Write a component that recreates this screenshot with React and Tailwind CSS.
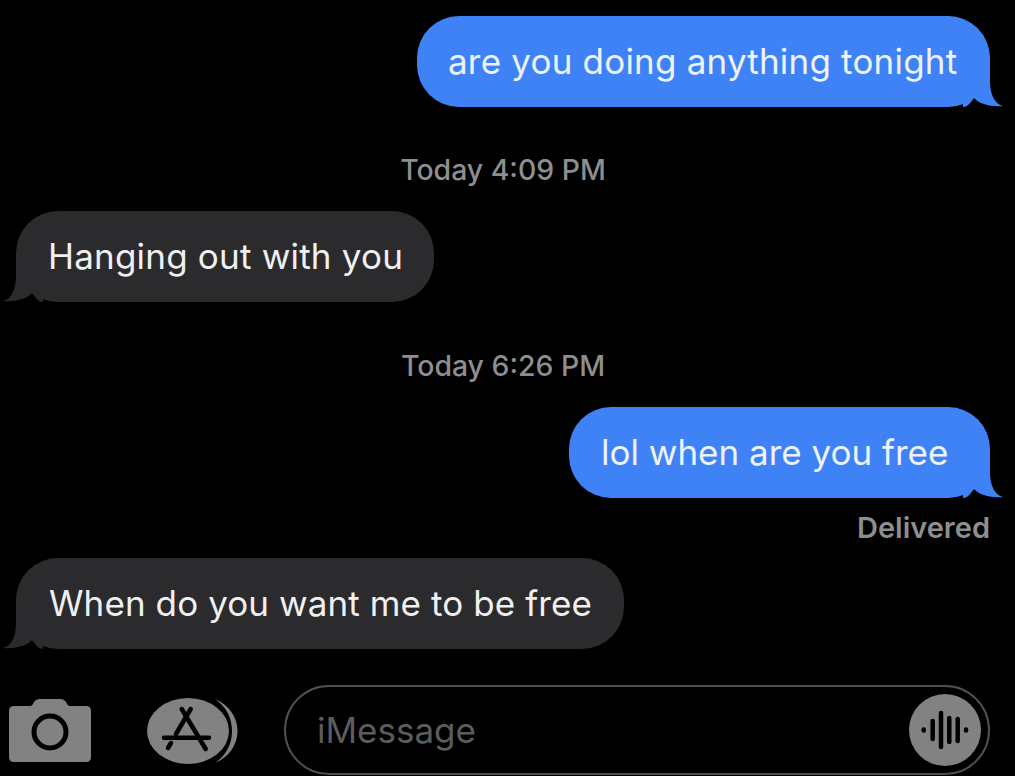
const font = { fontFamily: '"Inter", "Liberation Sans", sans-serif' };

function TailRight() {
  return (
    <svg className="absolute right-[-13px] bottom-0 w-[40px] h-[40px]" viewBox="0 0 40 40">
      <path d="M0 40 C5 40 8 35 11 31 C16 37 28 40 40 39 C32 37 27 28 27 14 L27 0 L0 0 Z" fill="#3f82f6" />
    </svg>
  );
}

function TailLeft() {
  return (
    <svg className="absolute left-[-13px] bottom-0 w-[40px] h-[40px]" viewBox="0 0 40 40">
      <path d="M40 40 C35 40 32 35 29 31 C24 37 12 40 0 39 C8 37 13 28 13 14 L13 0 L40 0 Z" fill="#2b2b2e" />
    </svg>
  );
}

function Sent({ children, className = "" }) {
  return (
    <div className={"relative self-end h-[91px] flex items-center rounded-[42px] bg-[#3f82f6] text-[#eef3fb] text-[35px] " + className}>
      <TailRight />
      <span className="relative">{children}</span>
    </div>
  );
}

function Received({ children, className = "" }) {
  return (
    <div className={"relative self-start h-[91px] flex items-center rounded-[42px] bg-[#2b2b2e] text-[#f0f0f0] text-[35px] " + className}>
      <TailLeft />
      <span className="relative">{children}</span>
    </div>
  );
}

function Stamp({ children, className = "" }) {
  return (
    <div className={"self-center text-[#8e8e90] text-[28.4px] leading-[34px] font-medium text-center " + className}>{children}</div>
  );
}

export default function App() {
  return (
    <div style={font} className="w-[1015px] h-[776px] bg-black overflow-hidden flex flex-col">
      <div className="flex flex-col pt-[16px] pl-[16px] pr-[25px]">
        <Sent className="w-[573px] pl-[31px] tracking-[0.2px]">are you doing anything tonight</Sent>
        <Stamp className="mt-[46px]">Today 4:09 PM</Stamp>
        <Received className="mt-[24px] w-[418px] pl-[32px] tracking-[0.2px]">Hanging out with you</Received>
        <Stamp className="mt-[47px]">Today 6:26 PM</Stamp>
        <Sent className="mt-[24px] w-[421px] pl-[32px]">lol when are you free</Sent>
        <div className="self-end mt-[13px] text-[#8e8e90] text-[29px] leading-[34px] font-semibold">Delivered</div>
        <Received className="mt-[13px] w-[608px] pl-[33px] tracking-[0.1px]">When do you want me to be free</Received>
      </div>
      <div className="flex items-start mt-[36px] pl-[9px] pr-[25px]">
        <svg className="w-[82px] h-[64px] mt-[14px] shrink-0" viewBox="0 0 82 64">
          <path d="M5 7 H21 Q23 7 24 5 L25 3 Q27 0 31 0 H51 Q55 0 57 3 L58 5 Q59 7 61 7 H77 Q82 7 82 12 V58 Q82 63 77 63 H5 Q0 63 0 58 V12 Q0 7 5 7 Z" fill="#828282" />
          <circle cx="41" cy="33" r="16" fill="none" stroke="#000" strokeWidth="5" />
        </svg>
        <svg className="w-[92px] h-[68px] mt-[12px] ml-[56px] shrink-0" viewBox="0 0 92 68">
          <path d="M68 2 C82 8 90.5 20 90.5 34 C90.5 48 82 60 68 66 C80 58 85 46 85 34 C85 22 80 10 68 2 Z" fill="#828282" />
          <ellipse cx="41" cy="34" rx="41" ry="33" fill="#828282" />
          <g fill="none" stroke="#000" strokeWidth="4.5" strokeLinecap="round">
            <path d="M34.7 12 L58.7 52" />
            <path d="M43.7 12 L29 37" />
            <path d="M24 46 L21 51" />
            <path d="M17 40.7 H62" />
          </g>
        </svg>
        <div className="ml-[45px] flex-1 h-[90px] rounded-[45px] border-2 border-[#505050] flex items-center pl-[31px] pr-[7px] justify-between">
          <span className="text-[#5c5c5c] text-[35px]">iMessage</span>
          <svg className="w-[72px] h-[72px] shrink-0" viewBox="0 0 72 72">
            <circle cx="36" cy="36" r="36" fill="#828282" />
            <g stroke="#000" strokeWidth="4.5" strokeLinecap="round">
              <path d="M14.7 35.5 V36.5" />
              <path d="M23.7 27 V45" />
              <path d="M32 19 V53" />
              <path d="M40.3 24 V48" />
              <path d="M48.7 25 V47" />
              <path d="M57 35.5 V36.5" />
            </g>
          </svg>
        </div>
      </div>
    </div>
  );
}
